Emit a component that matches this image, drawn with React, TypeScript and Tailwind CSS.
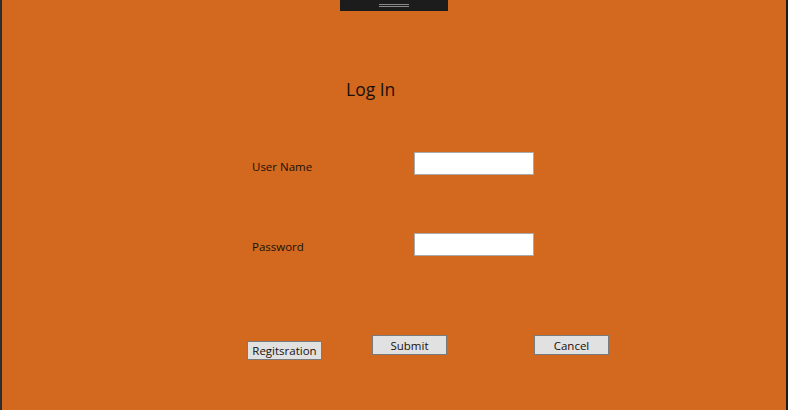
export default function App() {
  const font = { fontFamily: '"Open Sans", "Noto Sans", sans-serif' };
  return (
    <div className="flex h-[410px] w-[788px] overflow-hidden bg-[#d2691e] text-[#1a1008]" style={font}>
      <div className="w-[2px] bg-[#2d2d30]" />
      <div className="flex flex-1 flex-col">
        <div className="ml-[338px] flex h-[11px] w-[108px] flex-col items-center justify-center gap-[1px] bg-[#1c1c1c]">
          <div className="h-px w-[30px] bg-[#8a8a8a]" />
          <div className="h-px w-[30px] bg-[#8a8a8a]" />
        </div>
        <h1 className="ml-[344px] mt-[66px] text-[17.5px] leading-[24px]">Log In</h1>
        <div className="mt-[51px] flex items-center">
          <span className="ml-[250px] w-[162px] pt-[6px] text-[11.5px] leading-[16px]">User Name</span>
          <input className="h-[23px] w-[120px] border border-[#a9a9a9] bg-white outline-none" />
        </div>
        <div className="mt-[58px] flex items-center">
          <span className="ml-[250px] w-[162px] pt-[5px] text-[11.5px] leading-[16px]">Password</span>
          <input type="password" className="h-[23px] w-[120px] border border-[#a9a9a9] bg-white outline-none" />
        </div>
        <div className="mt-[79px] flex items-start">
          <button className="ml-[245px] mt-[6px] h-[19px] w-[75px] border border-[#7a7a7a] bg-[#e1e1e1] pt-[1px] text-[11.5px] leading-[16px]">
            Regitsration
          </button>
          <button className="ml-[50px] h-[20px] w-[75px] border border-[#7a7a7a] bg-[#e1e1e1] pt-[2px] text-[11.5px] leading-[16px]">
            Submit
          </button>
          <button className="ml-[87px] h-[20px] w-[75px] border border-[#7a7a7a] bg-[#e1e1e1] pt-[2px] text-[11.5px] leading-[16px]">
            Cancel
          </button>
        </div>
      </div>
      <div className="w-[2px] bg-[#1e1a18]" />
    </div>
  );
}
